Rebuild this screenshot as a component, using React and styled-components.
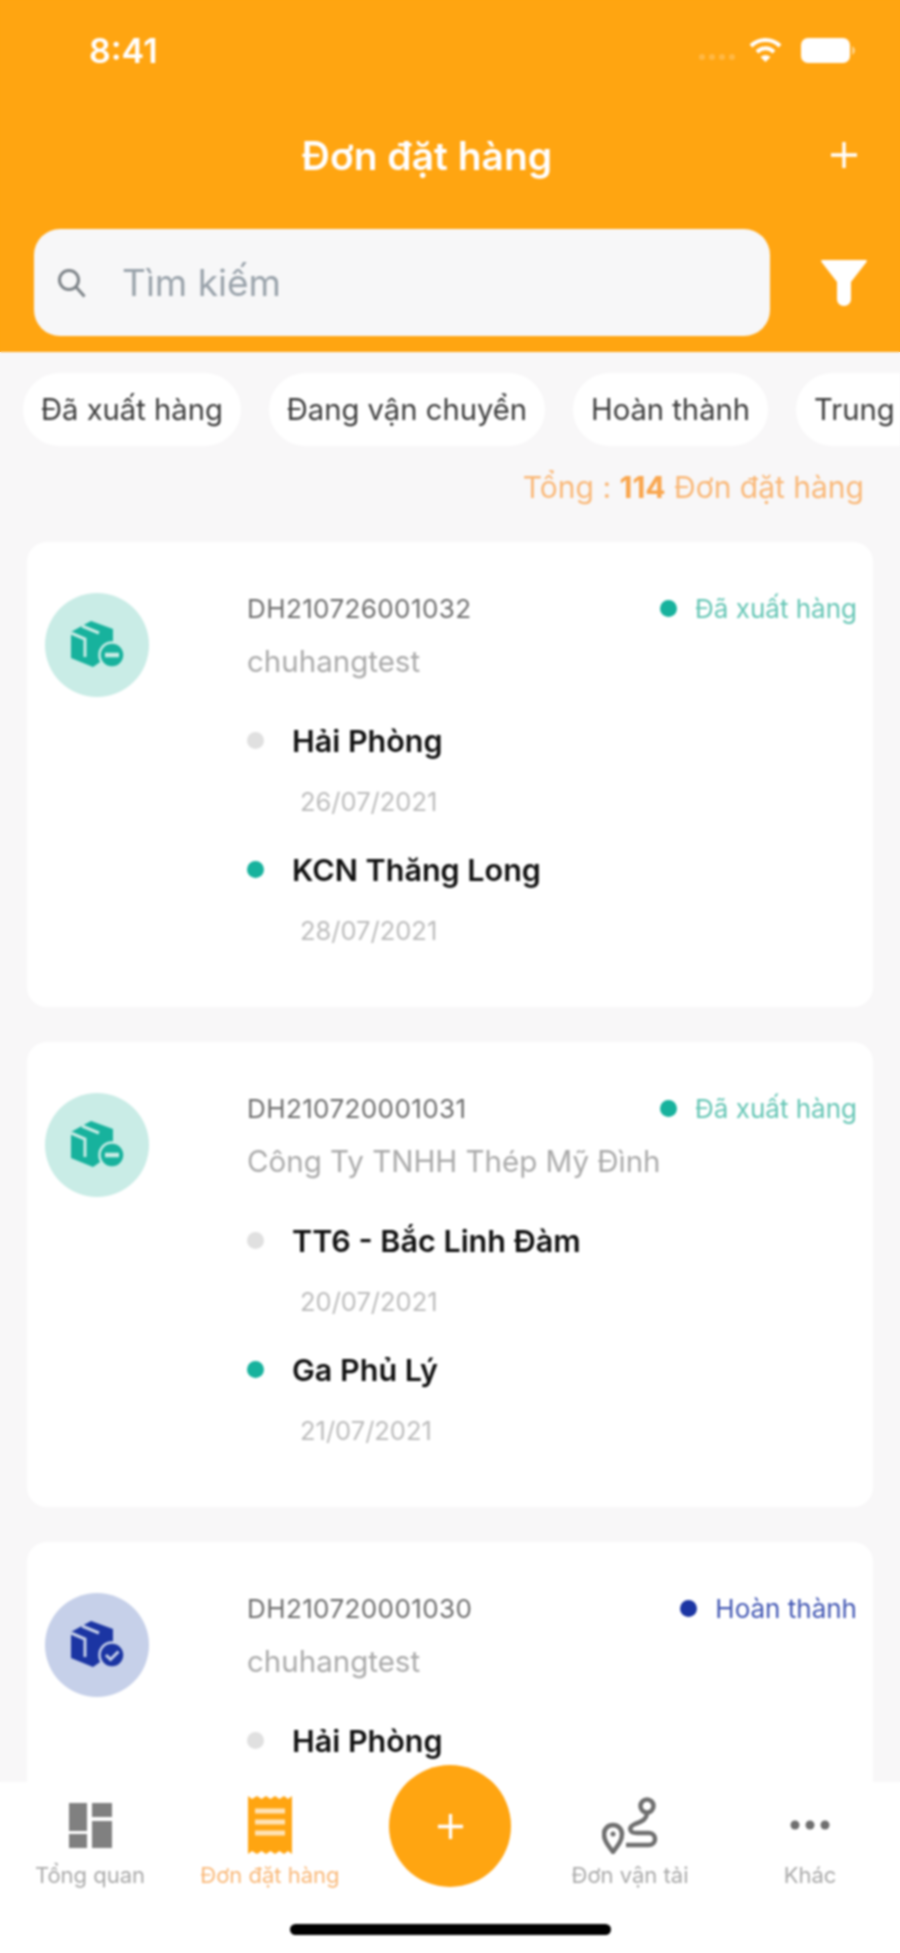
import React from 'react'
import styled, { createGlobalStyle } from 'styled-components'

const ORANGE = '#ffa511'
const TEAL = { main: '#17b29d', soft: '#c9ece6', text: '#66c6b5' }
const BLUE = { main: '#1b35a3', soft: '#c6d0e9', text: '#4257b3' }

const GlobalStyle = createGlobalStyle`
  html, body {
    margin: 0;
    padding: 0;
  }
  html {
    background: linear-gradient(${ORANGE} 352px, #f8f7f8 352px, #f8f7f8 1782px, #fff 1782px);
  }
  * {
    box-sizing: border-box;
  }
`

const Page = styled.div`
  width: 900px;
  height: 1953px;
  display: flex;
  flex-direction: column;
  overflow: hidden;
  background: #f8f7f8;
  font-family: Inter, "Noto Sans", sans-serif;
  filter: blur(0.8px);
`
const Header = styled.header`
  height: 352px;
  flex-shrink: 0;
  background: ${ORANGE};
  display: flex;
  flex-direction: column;
  color: #fff;
`
const StatusBar = styled.div`
  height: 100px;
  padding: 0 45px 0 89px;
  display: flex;
  align-items: center;
  justify-content: space-between;
`
const Time = styled.span`
  font-size: 34px;
  font-weight: 600;
`
const StatusIcons = styled.div`
  display: flex;
  align-items: center;
  gap: 19px;
`
const SignalDots = styled.div`
  display: flex;
  gap: 4px;
  margin-top: 14px;
  margin-right: -5px;
`
const SignalDot = styled.i`
  width: 6px;
  height: 6px;
  border-radius: 50%;
  background: rgba(255, 255, 255, 0.22);
`
const TitleRow = styled.div`
  height: 60px;
  margin-top: 25px;
  position: relative;
  display: flex;
  align-items: center;
  justify-content: center;
`
const Title = styled.h1`
  margin: 0 46px 0 0;
  font-size: 39px;
  font-weight: 600;
`
const AddButton = styled.div`
  position: absolute;
  right: 42px;
  top: 16px;
  display: flex;
`
const SearchRow = styled.div`
  margin-top: 44px;
  padding: 0 33px 0 34px;
  display: flex;
  align-items: center;
  justify-content: space-between;
`
const SearchBox = styled.div`
  width: 736px;
  height: 107px;
  border-radius: 26px;
  background: #f7f7f8;
  padding-left: 23px;
  display: flex;
  align-items: center;
  gap: 36px;
`
const SearchText = styled.span`
  color: #9aa3ab;
  font-size: 37px;
`
const Chips = styled.div`
  margin-top: 21px;
  padding-left: 23px;
  display: flex;
  gap: 28px;
  flex-shrink: 0;
`
const Chip = styled.div`
  height: 73px;
  flex-shrink: 0;
  padding: 0 18px;
  border-radius: 37px;
  background: #fff;
  color: #3c3c3c;
  font-size: 29.2px;
  display: flex;
  align-items: center;
`
const Total = styled.div`
  margin-top: 21px;
  padding-right: 36px;
  height: 40px;
  line-height: 40px;
  text-align: right;
  color: #f9b878;
  font-size: 30px;
  flex-shrink: 0;

  b {
    color: #f9a64e;
    font-weight: 700;
  }
`
const List = styled.main`
  flex: 1;
  min-height: 0;
  overflow: hidden;
  margin-top: 35px;
  padding: 0 27px 0 27px;
  display: flex;
  flex-direction: column;
  gap: 35px;
`
const Card = styled.article`
  height: 465px;
  flex-shrink: 0;
  background: #fff;
  border-radius: 20px;
  padding: 46px 16px 0 18px;
  display: flex;
`
const Avatar = styled.div`
  width: 104px;
  height: 104px;
  margin-top: 5px;
  margin-right: 98px;
  flex-shrink: 0;
  border-radius: 50%;
  background: ${props => props.$tone.soft};
  display: flex;
  align-items: center;
  justify-content: center;
`
const CardBody = styled.div`
  flex: 1;
  min-width: 0;
`
const TopRow = styled.div`
  height: 40px;
  display: flex;
  align-items: center;
  justify-content: space-between;
`
const OrderId = styled.span`
  color: #6f6f6f;
  font-size: 26px;
  letter-spacing: 0.4px;
`
const Status = styled.span`
  display: flex;
  align-items: center;
  gap: 18px;
  color: ${props => props.$tone.text};
  font-size: 26px;
`
const Dot = styled.i`
  width: 17px;
  height: 17px;
  border-radius: 50%;
  flex-shrink: 0;
  background: ${props => props.$color};
`
const Customer = styled.div`
  height: 40px;
  line-height: 40px;
  margin-top: 13px;
  margin-bottom: 39px;
  color: #aaa;
  font-size: 29.5px;
  white-space: nowrap;
`
const Stop = styled.div`
  margin-bottom: 27px;
`
const Place = styled.div`
  height: 40px;
  display: flex;
  align-items: center;
  gap: 28px;
  color: #111;
  font-size: 30.5px;
  font-weight: 600;
`
const StopDate = styled.div`
  height: 40px;
  line-height: 40px;
  margin-top: 22px;
  padding-left: 53px;
  color: #bcbcbc;
  font-size: 25.5px;
`
const TabBar = styled.nav`
  height: 171px;
  flex-shrink: 0;
  position: relative;
  z-index: 1;
  background: #fff;
  display: flex;
  flex-direction: column;
  align-items: center;
`
const Tabs = styled.div`
  width: 100%;
  height: 108px;
  display: grid;
  grid-template-columns: repeat(5, 180px);
`
const Tab = styled.div`
  padding-top: 14px;
  display: flex;
  flex-direction: column;
  align-items: center;
  color: ${props => (props.$active ? '#f9b878' : '#a9a9a9')};
  font-size: 22px;
`
const TabIcon = styled.div`
  height: 58px;
  display: flex;
  align-items: center;
  justify-content: center;
`
const TabLabel = styled.span`
  margin-top: 6px;
  line-height: 30px;
  white-space: nowrap;
`
const FabCell = styled.div`
  display: flex;
  justify-content: center;
`
const Fab = styled.div`
  width: 122px;
  height: 122px;
  margin-top: -17px;
  border-radius: 50%;
  background: ${ORANGE};
  display: flex;
  align-items: center;
  justify-content: center;
`
const HomeBar = styled.div`
  width: 321px;
  height: 11px;
  margin-top: 34px;
  border-radius: 6px;
  background: #000;
`

const Plus = ({ size }) => (
  <svg width={size} height={size} viewBox="0 0 28 28" fill="none" stroke="#fff" strokeWidth="3.4">
    <path d="M14 1v26M1 14h26" />
  </svg>
)

const Wifi = () => (
  <svg width="33" height="26" viewBox="0 0 33 26" fill="none" stroke="#fff" strokeWidth="4">
    <path d="M2 9c8-8 21-8 29 0" />
    <path d="M8 15c5-5 12-5 17 0" />
    <path d="M16.5 25l-5-5c3-2.500 7-2.500 10 0z" fill="#fff" stroke="none" />
  </svg>
)

const Battery = () => (
  <svg width="54" height="25" viewBox="0 0 54 25">
    <rect x="0" y="0" width="49" height="25" rx="7" fill="#fff" />
    <path d="M51 8c2 1 3 3 3 4.500S53 16 51 17z" fill="#fff" fillOpacity="0.5" />
  </svg>
)

const SearchIcon = () => (
  <svg width="29" height="30" viewBox="0 0 29 30" fill="none" stroke="#7d8388" strokeWidth="3">
    <circle cx="12" cy="12" r="9.500" />
    <path d="M19 19l8.500 9.500" />
  </svg>
)

const FilterIcon = () => (
  <svg width="46" height="46" viewBox="0 0 46 46" fill="#fff">
    <path d="M1 0h44c1 0 1 1 .5 2L30 22v17c0 4-3 7-7 7s-7-3-7-7V22L.5 2C0 1 0 0 1 0z" />
  </svg>
)

const BoxIcon = ({ tone, done }) => (
  <svg width="56" height="50" viewBox="0 0 56 50">
    <path d="M22 1l22 8v24L24 47 2 38V12z" fill={tone.main} />
    <path d="M2 13l14 6v18M13 6l17 7" fill="none" stroke={tone.soft} strokeWidth="3" />
    <circle cx="43" cy="35" r="12.500" fill={tone.main} stroke={tone.soft} strokeWidth="2.500" />
    {done
      ? <path d="M37 35l4.500 4.500 8-8" fill="none" stroke={tone.soft} strokeWidth="3" />
      : <path d="M36 35h14" fill="none" stroke={tone.soft} strokeWidth="4.500" />}
  </svg>
)

const DashboardIcon = () => (
  <svg width="43" height="45" viewBox="0 0 43 45" fill="#808080">
    <rect x="0" y="0" width="18" height="28" />
    <rect x="0" y="31" width="18" height="14" />
    <rect x="23" y="0" width="20" height="14" />
    <rect x="23" y="18" width="20" height="27" />
  </svg>
)

const ReceiptIcon = () => (
  <svg width="44" height="58" viewBox="0 0 44 58">
    <path
      d="M0 0l4 3 5-3 4.500 3L18 0l4.500 3L27 0l4.500 3L36 0l4 3 4-3v58l-4-3-4 3-4.500-3-4.500 3-4.500-3-4.500 3-4.500-3L9 58l-5-3-4 3z"
      fill={ORANGE}
    />
    <path d="M7 15h30M7 26h30M7 37h30" stroke="#ffe3b5" strokeWidth="5" />
  </svg>
)

const RouteIcon = () => (
  <svg width="57" height="58" viewBox="0 0 57 58" fill="none" stroke="#6f6f6f" strokeWidth="4.500">
    <circle cx="45" cy="10" r="6.500" />
    <path d="M45 18c-1 6-5 7-12 10-7 3-6 9 2 9h12c8 0 8 12 0 12H24" />
    <path d="M11 56C5 48 2 44 2 38c0-5 4-9 9-9s9 4 9 9c0 6-3 10-9 18z" />
    <circle cx="11" cy="38" r="2.500" fill="#6f6f6f" stroke="none" />
  </svg>
)

const MoreIcon = () => (
  <svg width="40" height="10" viewBox="0 0 40 10" fill="#6f6f6f">
    <circle cx="5" cy="5" r="4.500" />
    <circle cx="20" cy="5" r="4.500" />
    <circle cx="35" cy="5" r="4.500" />
  </svg>
)

const chips = ['Đã xuất hàng', 'Đang vận chuyển', 'Hoàn thành', 'Trung chuyển']

const orders = [
  {
    id: 'DH210726001032',
    customer: 'chuhangtest',
    status: 'Đã xuất hàng',
    tone: TEAL,
    from: 'Hải Phòng',
    fromDate: '26/07/2021',
    to: 'KCN Thăng Long',
    toDate: '28/07/2021',
  },
  {
    id: 'DH210720001031',
    customer: 'Công Ty TNHH Thép Mỹ Đình',
    status: 'Đã xuất hàng',
    tone: TEAL,
    from: 'TT6 - Bắc Linh Đàm',
    fromDate: '20/07/2021',
    to: 'Ga Phủ Lý',
    toDate: '21/07/2021',
  },
  {
    id: 'DH210720001030',
    customer: 'chuhangtest',
    status: 'Hoàn thành',
    tone: BLUE,
    done: true,
    from: 'Hải Phòng',
    fromDate: '20/07/2021',
    to: 'KCN Thăng Long',
    toDate: '21/07/2021',
  },
]

const App = () => {
  return (
    <Page>
      <GlobalStyle />
      <Header>
        <StatusBar>
          <Time>8:41</Time>
          <StatusIcons>
            <SignalDots>
              <SignalDot />
              <SignalDot />
              <SignalDot />
              <SignalDot />
            </SignalDots>
            <Wifi />
            <Battery />
          </StatusIcons>
        </StatusBar>
        <TitleRow>
          <Title>Đơn đặt hàng</Title>
          <AddButton>
            <Plus size={28} />
          </AddButton>
        </TitleRow>
        <SearchRow>
          <SearchBox>
            <SearchIcon />
            <SearchText>Tìm kiếm</SearchText>
          </SearchBox>
          <FilterIcon />
        </SearchRow>
      </Header>
      <Chips>
        {chips.map(item => (
          <Chip key={item}>{item}</Chip>
        ))}
      </Chips>
      <Total>
        Tổng : <b>114</b> Đơn đặt hàng
      </Total>
      <List>
        {orders.map(order => (
          <Card key={order.id}>
            <Avatar $tone={order.tone}>
              <BoxIcon tone={order.tone} done={order.done} />
            </Avatar>
            <CardBody>
              <TopRow>
                <OrderId>{order.id}</OrderId>
                <Status $tone={order.tone}>
                  <Dot $color={order.tone.main} />
                  {order.status}
                </Status>
              </TopRow>
              <Customer>{order.customer}</Customer>
              <Stop>
                <Place>
                  <Dot $color="#e0e0e0" />
                  {order.from}
                </Place>
                <StopDate>{order.fromDate}</StopDate>
              </Stop>
              <Stop>
                <Place>
                  <Dot $color={TEAL.main} />
                  {order.to}
                </Place>
                <StopDate>{order.toDate}</StopDate>
              </Stop>
            </CardBody>
          </Card>
        ))}
      </List>
      <TabBar>
        <Tabs>
          <Tab>
            <TabIcon><DashboardIcon /></TabIcon>
            <TabLabel>Tổng quan</TabLabel>
          </Tab>
          <Tab $active>
            <TabIcon><ReceiptIcon /></TabIcon>
            <TabLabel>Đơn đặt hàng</TabLabel>
          </Tab>
          <FabCell>
            <Fab>
              <Plus size={27} />
            </Fab>
          </FabCell>
          <Tab>
            <TabIcon><RouteIcon /></TabIcon>
            <TabLabel>Đơn vận tải</TabLabel>
          </Tab>
          <Tab>
            <TabIcon><MoreIcon /></TabIcon>
            <TabLabel>Khác</TabLabel>
          </Tab>
        </Tabs>
        <HomeBar />
      </TabBar>
    </Page>
  )
}

export default App
